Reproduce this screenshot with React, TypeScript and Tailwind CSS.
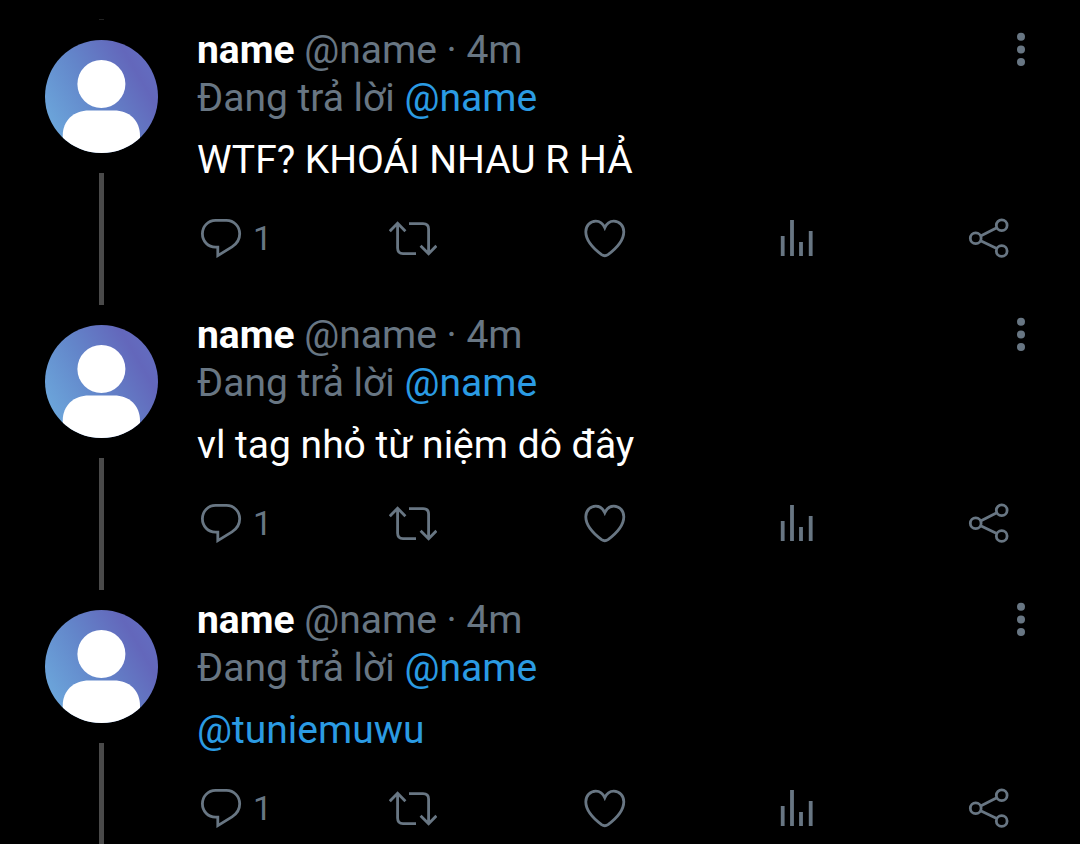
import type { ReactNode } from "react";

type Post = {
  id: number;
  text: string;
  isMention?: boolean;
  replies: number;
};

const posts: Post[] = [
  { id: 1, text: "WTF? KHOÁI NHAU R HẢ", replies: 1 },
  { id: 2, text: "vl tag nhỏ từ niệm dô đây", replies: 1 },
  { id: 3, text: "@tuniemuwu", isMention: true, replies: 1 },
];

function Avatar() {
  return (
    <svg viewBox="0 0 113 113" className="w-[113px] h-[113px] shrink-0" aria-hidden="true">
      <defs>
        <linearGradient id="avatar-bg" x1="0" y1="0.75" x2="0.95" y2="0.2">
          <stop offset="0" stopColor="#6ca8dc" />
          <stop offset="0.45" stopColor="#6386ca" />
          <stop offset="0.85" stopColor="#6367bb" />
          <stop offset="1" stopColor="#636dc0" />
        </linearGradient>
        <clipPath id="avatar-clip">
          <circle cx="56.5" cy="56.5" r="56.5" />
        </clipPath>
      </defs>
      <g clipPath="url(#avatar-clip)">
        <rect width="113" height="113" fill="url(#avatar-bg)" />
        <circle cx="56.4" cy="44" r="24" fill="#fff" />
        <path d="M17.7 120V96C17.7 80 29 70.5 44 70.5H69C84 70.5 95 80 95 96V120Z" fill="#fff" />
      </g>
    </svg>
  );
}

function ActionIcon({ children }: { children: ReactNode }) {
  return (
    <svg
      viewBox="0 0 48 40"
      className="w-12 h-10 shrink-0"
      fill="none"
      stroke="currentColor"
      strokeWidth="2.8"
      aria-hidden="true"
    >
      {children}
    </svg>
  );
}

function ReplyIcon() {
  return (
    <ActionIcon>
      <path d="M18.5 2.4H29.5C37 2.4 42.7 8.5 42.7 15.8C42.7 21.5 39.6 26 35 28.9L20.8 37.6V29.2H18.5C11 29.2 5.4 23.3 5.4 15.8C5.4 8.5 11 2.4 18.5 2.4Z" />
    </ActionIcon>
  );
}

function RetweetIcon() {
  return (
    <ActionIcon>
      <path d="M0.8 13.2L8.6 5.2L16.4 13.2M8.6 5.6V30C8.6 33.5 10.6 35.6 14 35.6H27" />
      <path d="M20 5.6H34C37.5 5.6 39.6 7.7 39.6 11V35.4M31.6 27.8L39.6 35.8L47.4 27.8" />
    </ActionIcon>
  );
}

function LikeIcon() {
  return (
    <ActionIcon>
      <path d="M23.8 9.8C22 5.6 18.6 3.1 14.8 3.1C9 3.1 4.8 7.9 4.8 13.7C4.8 23 14.2 31.8 20.6 36.6Q23.8 38.8 27 36.6C33.4 31.8 42.8 23 42.8 13.7C42.8 7.9 38.6 3.1 32.8 3.1C29 3.1 25.6 5.6 23.8 9.8Z" />
    </ActionIcon>
  );
}

function StatsIcon() {
  return (
    <ActionIcon>
      <path d="M9.7 18V38M19 2V38M28 24V38M37.7 13V38" strokeWidth="3.8" />
    </ActionIcon>
  );
}

function ShareIcon() {
  return (
    <ActionIcon>
      <circle cx="10.7" cy="20.3" r="5.4" />
      <circle cx="36.7" cy="7.3" r="5.4" />
      <circle cx="36.7" cy="33" r="5.4" />
      <path d="M15.6 17.9L31.8 9.8M15.6 22.8L31.8 30.6" />
    </ActionIcon>
  );
}

function PostItem({ post }: { post: Post }) {
  return (
    <article className="flex gap-[39px] pl-[45px] pr-[55px]">
      <div className="flex flex-col items-center gap-5 pt-5">
        <Avatar />
        <div className="w-[5px] flex-1 bg-[#4a4a4a]" />
      </div>

      <div className="flex-1 min-w-0 pt-[6px] pb-[47px]">
        <div className="flex justify-between">
          <p className="truncate">
            <span className="font-bold text-white">name</span> @name · 4m
          </p>
          <button type="button" aria-label="More" className="h-12 shrink-0">
            <svg viewBox="0 0 8 48" className="w-2 h-12" fill="currentColor" aria-hidden="true">
              <circle cx="4" cy="10.7" r="4" />
              <circle cx="4" cy="23.4" r="4" />
              <circle cx="4" cy="36" r="4" />
            </svg>
          </button>
        </div>
        <p>
          Đang trả lời{" "}
          <a href="#name" className="text-[#2b9be3]">
            @name
          </a>
        </p>
        <p className="mt-[14px] text-white">
          {post.isMention ? (
            <a href="#mention" className="text-[#2b9be3]">
              {post.text}
            </a>
          ) : (
            post.text
          )}
        </p>

        <div className="mt-[34px] pr-3 flex">
          <div className="flex-1">
            <button type="button" aria-label="Reply" className="flex items-center gap-2">
              <ReplyIcon />
              <span className="text-[34px] leading-10">{post.replies}</span>
            </button>
          </div>
          <div className="flex-1">
            <button type="button" aria-label="Retweet" className="flex">
              <RetweetIcon />
            </button>
          </div>
          <div className="flex-1">
            <button type="button" aria-label="Like" className="flex">
              <LikeIcon />
            </button>
          </div>
          <div className="flex-1">
            <button type="button" aria-label="View stats" className="flex">
              <StatsIcon />
            </button>
          </div>
          <button type="button" aria-label="Share" className="flex">
            <ShareIcon />
          </button>
        </div>
      </div>
    </article>
  );
}

export default function App() {
  return (
    <main className="h-screen overflow-hidden bg-black font-['Roboto',sans-serif] text-[39px] leading-[48px] text-[#687683]">
      {/* tail of the thread line from the post above */}
      <div className="flex h-5 items-end pl-[99px]">
        <div className="h-px w-[5px] bg-[#222]" />
      </div>
      {posts.map((post) => (
        <PostItem key={post.id} post={post} />
      ))}
    </main>
  );
}
